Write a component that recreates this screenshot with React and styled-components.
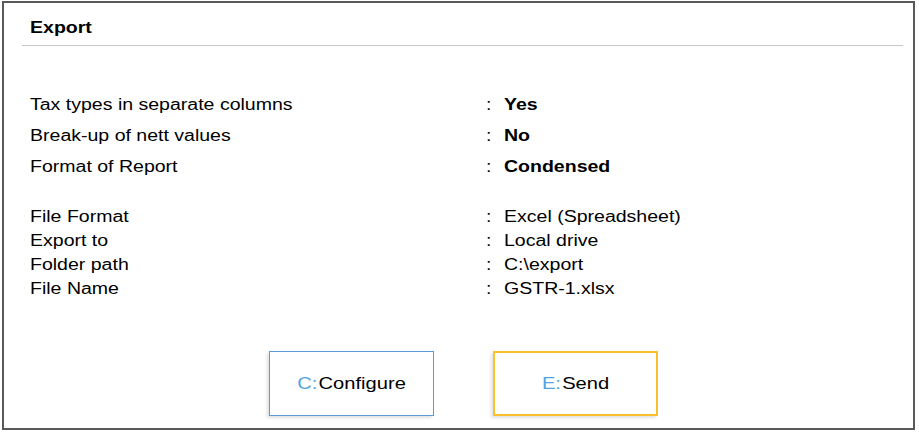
import React from 'react';
import styled, { createGlobalStyle, css } from 'styled-components';

const GlobalStyle = createGlobalStyle`
  html, body {
    margin: 0;
    padding: 0;
    background: #ffffff;
    font-family: "Liberation Sans", Arial, sans-serif;
    color: #000000;
  }
`;

// the reference text is drawn a little wider than plain Arial
const wide = css`
  display: inline-block;
  white-space: nowrap;
  transform: scaleX(1.22);
  transform-origin: left center;
`;

const Panel = styled.div`
  box-sizing: border-box;
  width: 913px;
  height: 429px;
  margin: 1px 0 0 2px;
  border: 2px solid #595959;
  display: flex;
  flex-direction: column;
`;

const Header = styled.div`
  margin: 13px 10px 0 18px;
  padding: 0 0 5px 8px;
  border-bottom: 1px solid #c8c8c8;
  line-height: 24px;
`;

const Title = styled.span`
  ${wide};
  font-size: 16px;
  font-weight: bold;
`;

const Fields = styled.div`
  display: grid;
  grid-template-columns: 456px 18px 1fr;
  margin-top: ${props => props.top}px;
  padding-left: 26px;
  font-size: 16px;
  line-height: ${props => props.rowHeight}px;
`;

const Cell = styled.span`
  ${wide};
  font-weight: ${props => (props.bold ? 'bold' : 'normal')};
`;

const ButtonRow = styled.div`
  display: flex;
  justify-content: center;
  gap: 59px;
  margin-top: 50px;
  padding-left: 10px;
`;

const Button = styled.div`
  box-sizing: border-box;
  width: 165px;
  height: 65px;
  display: flex;
  align-items: center;
  justify-content: center;
  background: #ffffff;
  border: ${props => (props.active ? '2px solid #fbc02d' : '1px solid #5b9bd5')};
  box-shadow: -2px 2px 3px rgba(0, 0, 0, 0.12);
`;

const ButtonText = styled.span`
  ${wide};
  transform-origin: center center;
  font-size: 16.5px;
`;

const Key = styled.span`
  color: #4fa3e0;
  margin-right: 1px;
`;

const options = [
  { label: 'Tax types in separate columns', value: 'Yes' },
  { label: 'Break-up of nett values', value: 'No' },
  { label: 'Format of Report', value: 'Condensed' },
];

const exportInfo = [
  { label: 'File Format', value: 'Excel (Spreadsheet)' },
  { label: 'Export to', value: 'Local drive' },
  { label: 'Folder path', value: 'C:\\export' },
  { label: 'File Name', value: 'GSTR-1.xlsx' },
];

const FieldList = ({ items, bold, top, rowHeight }) => (
  <Fields top={top} rowHeight={rowHeight}>
    {items.map(item => (
      <React.Fragment key={item.label}>
        <div><Cell>{item.label}</Cell></div>
        <div><Cell>:</Cell></div>
        <div><Cell bold={bold}>{item.value}</Cell></div>
      </React.Fragment>
    ))}
  </Fields>
);

const App = () => (
  <>
    <GlobalStyle />
    <Panel>
      <Header>
        <Title>Export</Title>
      </Header>
      <FieldList items={options} bold top={43} rowHeight={31} />
      <FieldList items={exportInfo} top={23} rowHeight={24} />
      <ButtonRow>
        <Button>
          <ButtonText><Key>C:</Key>Configure</ButtonText>
        </Button>
        <Button active>
          <ButtonText><Key>E:</Key>Send</ButtonText>
        </Button>
      </ButtonRow>
    </Panel>
  </>
);

export default App;
